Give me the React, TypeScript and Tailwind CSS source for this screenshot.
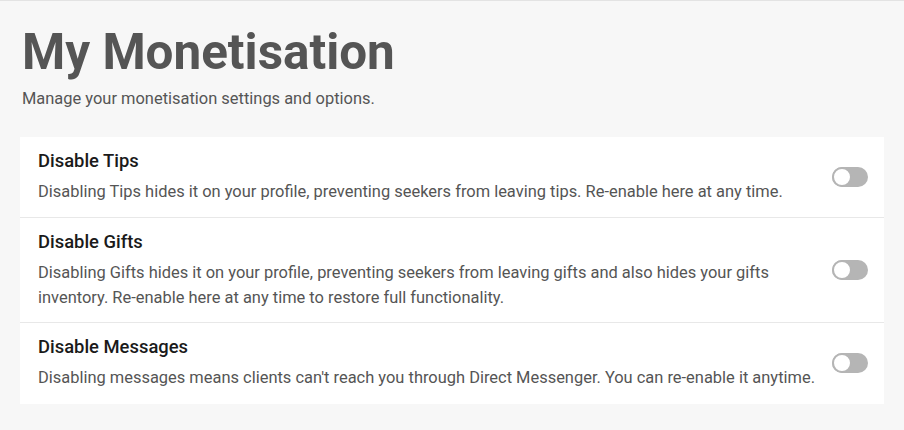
const ROWS = [
  {
    title: "Disable Tips",
    body: "Disabling Tips hides it on your profile, preventing seekers from leaving tips. Re-enable here at any time.",
  },
  {
    title: "Disable Gifts",
    body: "Disabling Gifts hides it on your profile, preventing seekers from leaving gifts and also hides your gifts inventory. Re-enable here at any time to restore full functionality.",
  },
  {
    title: "Disable Messages",
    body: "Disabling messages means clients can't reach you through Direct Messenger. You can re-enable it anytime.",
  },
];

function Toggle() {
  return (
    <span className="flex h-[20px] w-[36px] shrink-0 items-center rounded-full bg-[#b5b5b5]">
      <span className="h-[20px] w-[20px] rounded-full border-2 border-[#b5b5b5] bg-white" />
    </span>
  );
}

export default function App() {
  return (
    <div
      className="h-[430px] w-[904px] border-t border-[#e3e3e3] bg-[#f7f7f7] px-5"
      style={{ fontFamily: "Roboto, 'Liberation Sans', sans-serif" }}
    >
      <h1 className="pl-[2px] pt-[25px] text-[49.4px] font-bold leading-[52px] text-[#555555]">My Monetisation</h1>
      <p className="mt-[9px] pl-[2px] text-[16.45px] leading-6 text-[#555555]">Manage your monetisation settings and options.</p>

      <div className="mt-[26px] bg-white">
        {ROWS.map((row, i) => (
          <div
            key={row.title}
            className={
              "flex items-center gap-2 pl-[18px] pr-4 pt-3" +
              (i === 0 ? " pb-[13px] border-b border-[#e8e8e8]" : i === 1 ? " pb-3 border-b border-[#e8e8e8]" : " pb-[14px]")
            }
          >
            <div className="flex-1">
              <p className="text-[18.4px] font-medium leading-6 text-[#1a1a1a]">{row.title}</p>
              <p className="mt-[6px] text-[16.45px] leading-[25px] text-[#555555]">{row.body}</p>
            </div>
            <Toggle />
          </div>
        ))}
      </div>
    </div>
  );
}
